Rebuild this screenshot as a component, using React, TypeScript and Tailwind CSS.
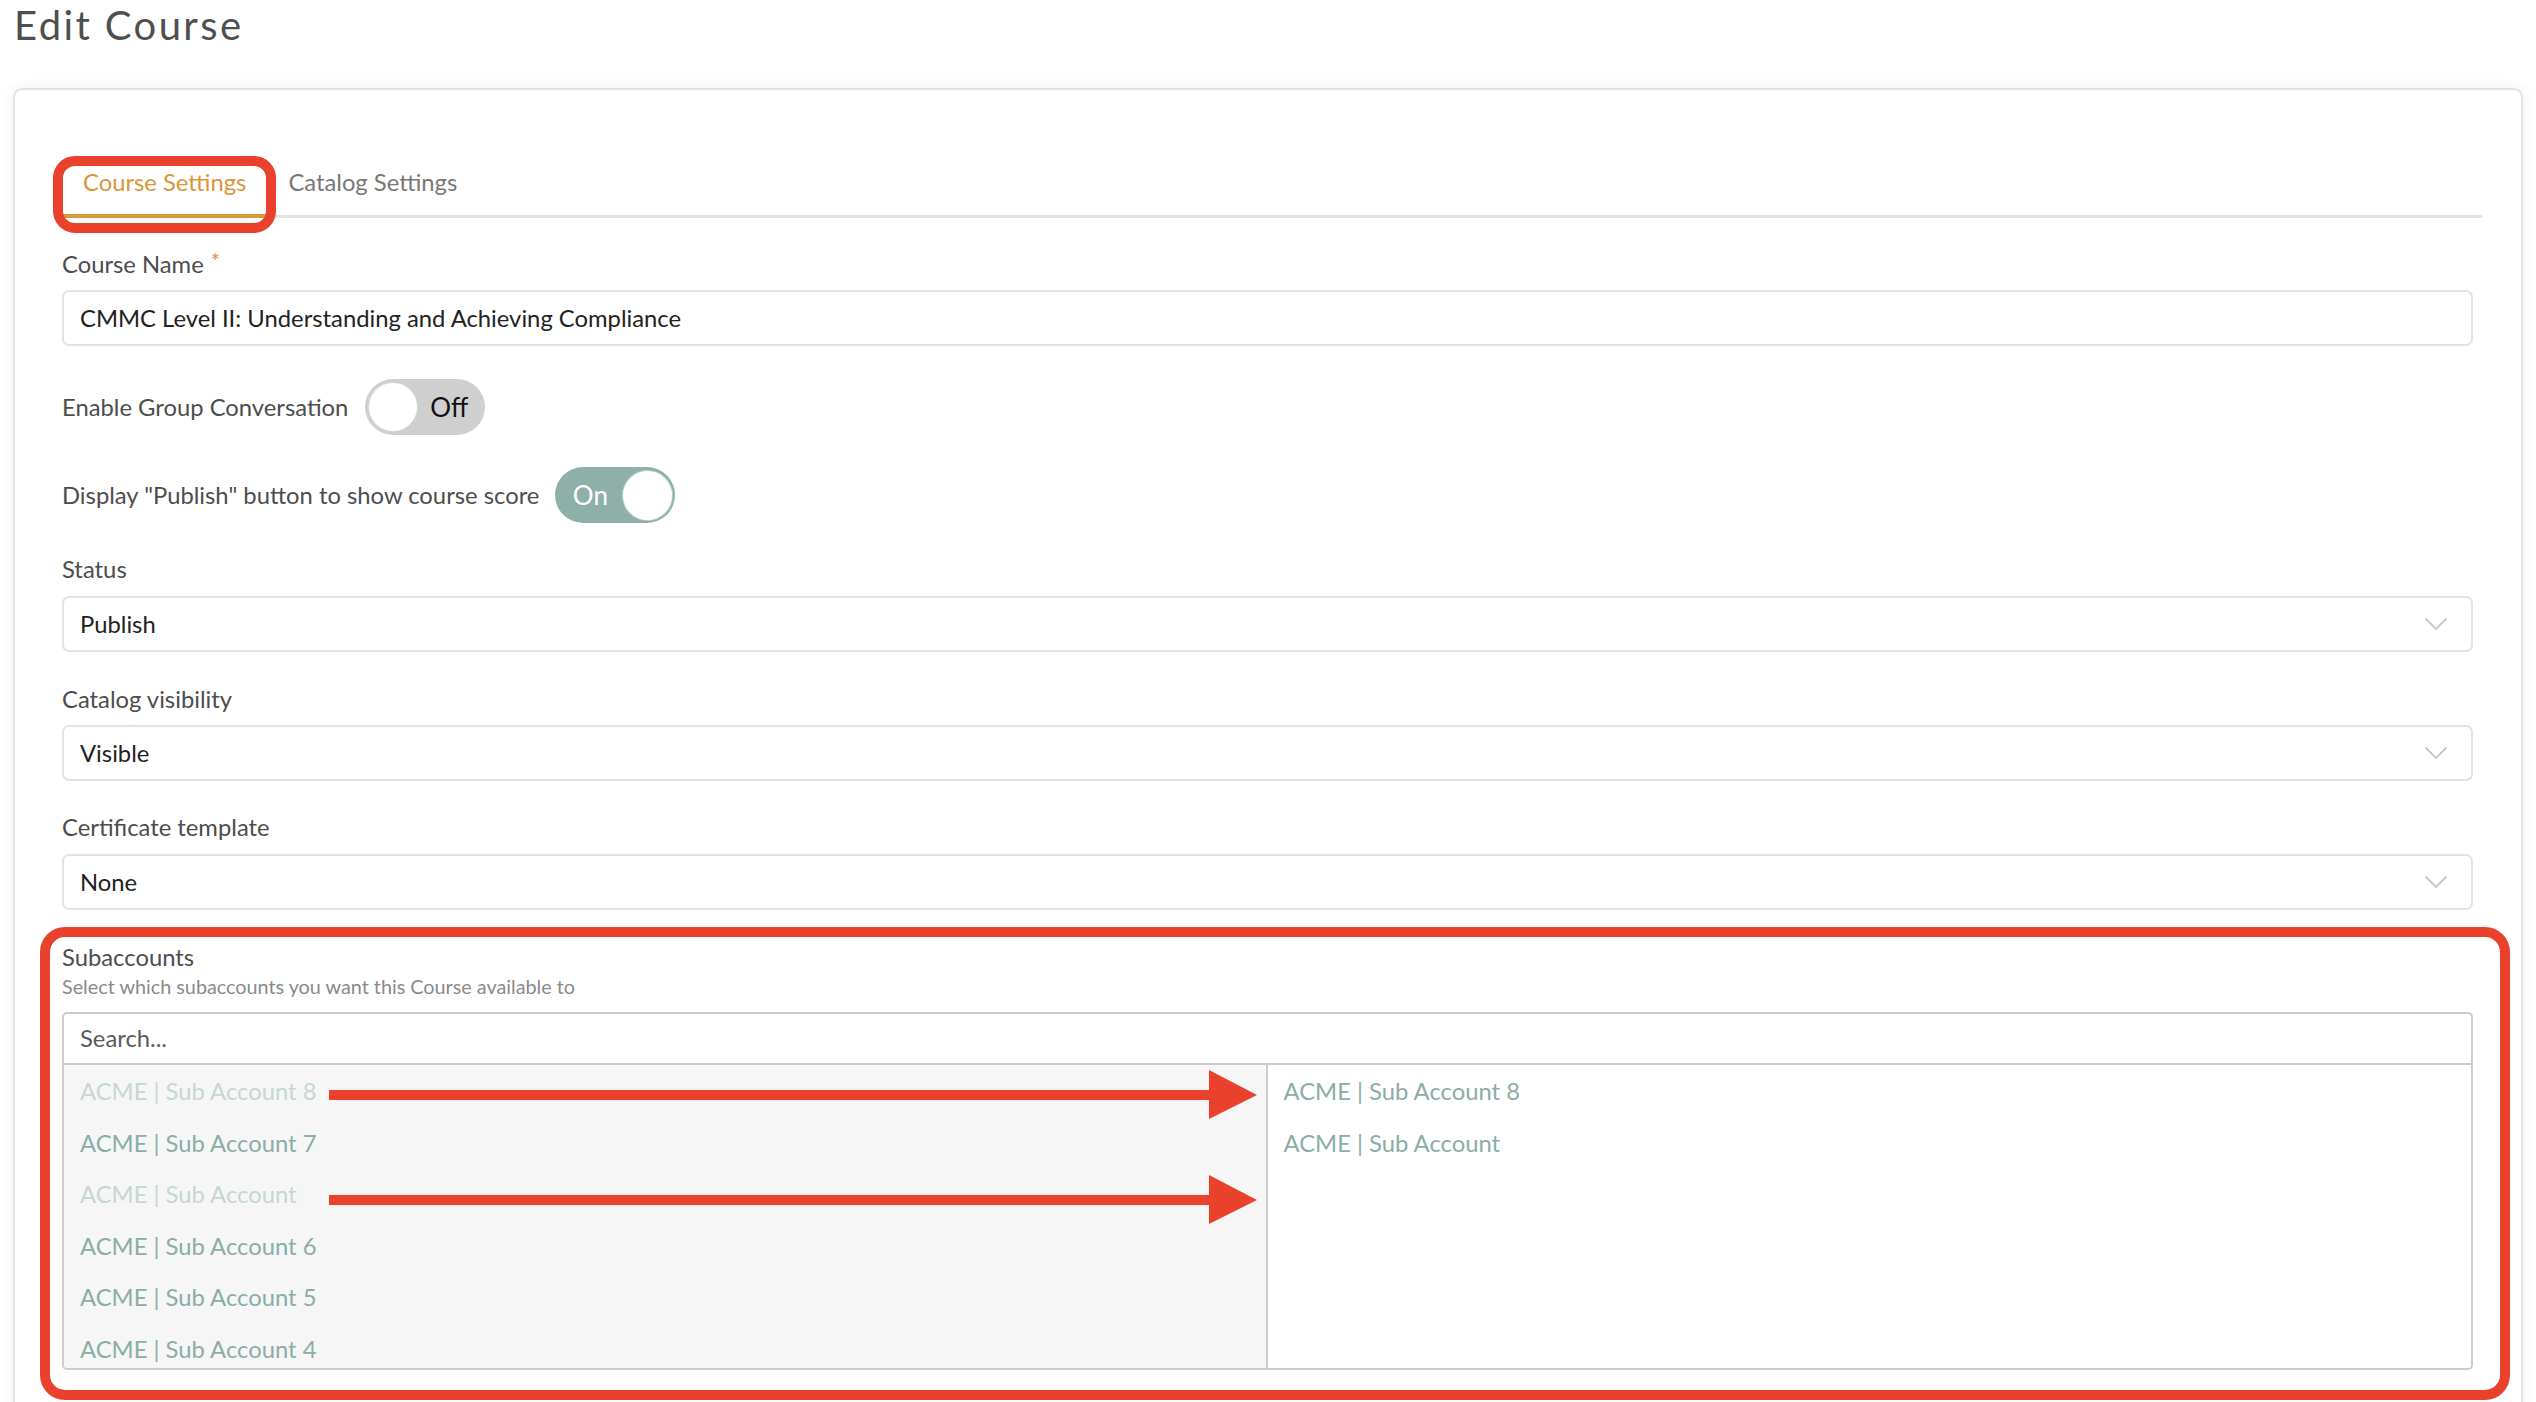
import React from "react";

const Chevron = () => (
  <svg width="24" height="14" viewBox="0 0 24 14" className="shrink-0">
    <polyline points="1.5,1.5 12,12 22.5,1.5" fill="none" stroke="#c6c6c6" strokeWidth="1.8" />
  </svg>
);

const Label = ({ children }: { children: React.ReactNode }) => (
  <div className="text-[23.8px] leading-[29px] text-[#4d4d4d]">{children}</div>
);

const Select = ({ value, className = "" }: { value: string; className?: string }) => (
  <div
    className={`h-[56px] border-2 border-[#e3e3e3] rounded-[7px] pl-[16px] pr-[23px] flex items-center justify-between text-[23.8px] leading-[29px] text-[#222] ${className}`}
  >
    <span>{value}</span>
    <Chevron />
  </div>
);

const leftItems = [
  { t: "ACME | Sub Account 8", d: true },
  { t: "ACME | Sub Account 7", d: false },
  { t: "ACME | Sub Account", d: true },
  { t: "ACME | Sub Account 6", d: false },
  { t: "ACME | Sub Account 5", d: false },
  { t: "ACME | Sub Account 4", d: false },
];

const rightItems = ["ACME | Sub Account 8", "ACME | Sub Account"];

export default function App() {
  return (
    <div className="relative w-full bg-white font-['Lato',sans-serif] px-[13px] overflow-hidden">
      <h1 className="mt-[1px] pl-[1px] text-[40px] leading-[48px] font-normal tracking-[2.4px] text-[#4f4f4f]">
        Edit Course
      </h1>

      <div className="mt-[39px] border-2 border-[#e3e3e3] rounded-[9px] shadow-[0_0_14px_rgba(0,0,0,0.07)] pt-[78px] pl-[47px] pr-[48px] pb-[80px]">
        {/* Tabs */}
        <div className="flex border-b-[3px] border-[#e2e2e2] -mr-[9px]">
          <div className="-mb-[3px] pl-[21px] pr-[20px] pb-[17px] border-b-4 border-[#d9993d] text-[23.8px] leading-[29px] text-[#d9963a]">
            Course Settings
          </div>
          <div className="-mb-[3px] ml-[1px] pl-[21px] pr-[20px] pb-[17px] border-b-4 border-transparent text-[23.8px] leading-[29px] text-[#777]">
            Catalog Settings
          </div>
        </div>

        <div className="mt-[32px]">
          <Label>
            Course Name<span className="ml-[7px] text-[22px] relative -top-[4px] text-[#d9963a]">*</span>
          </Label>
        </div>
        <div className="mt-[11px] h-[56px] border-2 border-[#e3e3e3] rounded-[7px] px-[16px] flex items-center text-[23.8px] leading-[29px] text-[#222]">
          CMMC Level II: Understanding and Achieving Compliance
        </div>

        {/* Toggle 1 */}
        <div className="mt-[33px] h-[56px] flex items-center gap-[17px]">
          <Label>Enable Group Conversation</Label>
          <div className="w-[120px] h-[56px] rounded-full bg-[#cfcfcf] flex items-center">
            <div className="ml-[4px] w-[48px] h-[48px] rounded-full bg-white shadow-[0_0_0_1px_#d8d8d8]" />
            <div className="flex-1 text-center pr-[4px] text-[26px] leading-[30px] text-[#111]">Off</div>
          </div>
        </div>

        {/* Toggle 2 */}
        <div className="mt-[32px] h-[56px] flex items-center gap-[16px]">
          <Label>Display "Publish" button to show course score</Label>
          <div className="w-[120px] h-[56px] rounded-full bg-[#8fb0a9] flex items-center">
            <div className="flex-1 text-center pl-[2px] text-[26px] leading-[30px] text-white">On</div>
            <div className="mr-[3px] w-[49px] h-[49px] rounded-full bg-white shadow-[0_0_0_1px_#b9cfca]" />
          </div>
        </div>

        <div className="mt-[32px]">
          <Label>Status</Label>
        </div>
        <Select value="Publish" className="mt-[12px]" />

        <div className="mt-[33px]">
          <Label>Catalog visibility</Label>
        </div>
        <Select value="Visible" className="mt-[11px]" />

        <div className="mt-[32px]">
          <Label>Certificate template</Label>
        </div>
        <Select value="None" className="mt-[12px]" />

        {/* Subaccounts */}
        <div className="mt-[33px]">
          <Label>Subaccounts</Label>
        </div>
        <div className="mt-[2px] text-[19.8px] leading-[24px] text-[#8a8a8a]">
          Select which subaccounts you want this Course available to
        </div>
        <div className="mt-[14px] h-[53px] border-2 border-[#cccccc] rounded-t-[5px] px-[16px] flex items-center text-[23.8px] leading-[29px] text-[#5a5a5a]">
          Search...
        </div>
        <div className="h-[305px] border-2 border-t-0 border-[#cccccc] rounded-b-[5px] grid grid-cols-2 overflow-hidden">
          <div className="bg-[#f6f6f6] border-r-2 border-[#cccccc] pt-[1px] pl-[16px] overflow-hidden">
            {leftItems.map((it, i) => (
              <div
                key={i}
                className={`text-[23.8px] leading-[51.6px] whitespace-nowrap ${it.d ? "text-[#c6d7d4]" : "text-[#8bada7]"}`}
              >
                {it.t}
              </div>
            ))}
          </div>
          <div className="bg-white pt-[1px] pl-[16px]">
            {rightItems.map((t, i) => (
              <div key={i} className="text-[23.8px] leading-[51.6px] whitespace-nowrap text-[#8bada7]">
                {t}
              </div>
            ))}
          </div>
        </div>
      </div>

      {/* Annotations */}
      <div className="absolute left-[53px] top-[156px] w-[223px] h-[77px] border-[10px] border-[#e9412b] rounded-[22px] pointer-events-none" />
      <div className="absolute left-[40px] top-[927px] w-[2470px] h-[473px] border-[10px] border-[#e9412b] rounded-[25px] pointer-events-none" />
      <svg className="absolute left-0 top-0 pointer-events-none" width="2536" height="1402" viewBox="0 0 2536 1402">
        <rect x="329" y="1090" width="882" height="10" fill="#e9412b" />
        <polygon points="1209,1070 1257,1095 1209,1119" fill="#e9412b" />
        <rect x="329" y="1195" width="882" height="10" fill="#e9412b" />
        <polygon points="1209,1175 1257,1200 1209,1224" fill="#e9412b" />
      </svg>
    </div>
  );
}
